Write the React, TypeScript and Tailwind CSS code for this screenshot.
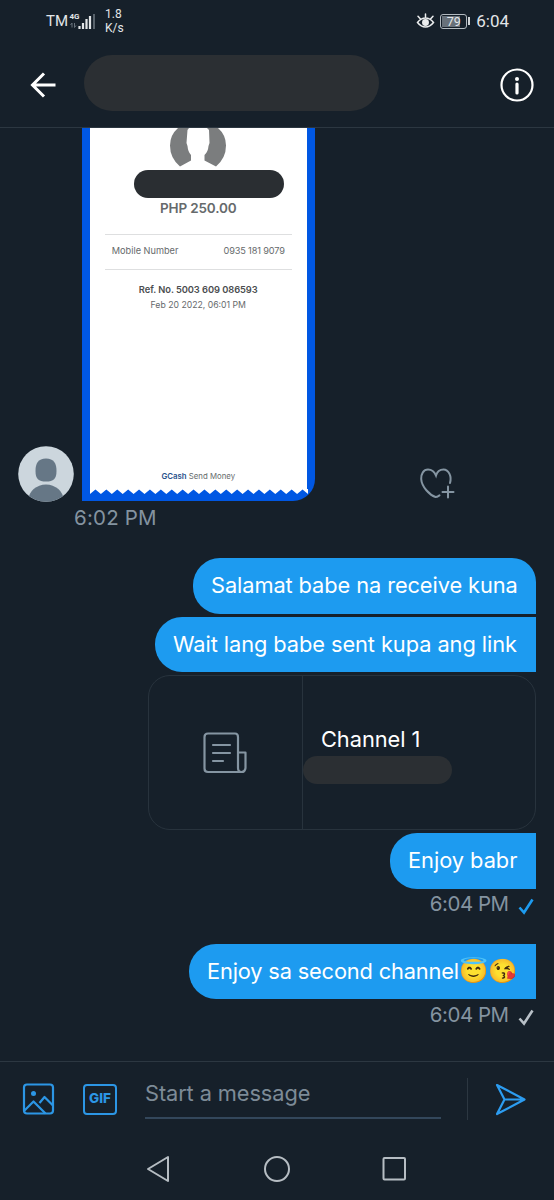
import React from 'react';

interface MessageBubbleProps {
  className: string;
  children: React.ReactNode;
}

export default function App() {
  return (
    <div className="w-[554px] h-[1200px] overflow-hidden flex flex-col bg-[#16202a] font-['Roboto','Noto_Color_Emoji',sans-serif] text-white">
      <StatusBar />
      <Header />
      <main className="h-[933px] shrink-0 overflow-hidden flex flex-col pr-[18.500px] font-['Inter','Noto_Color_Emoji',sans-serif]">
        <div className="flex items-end pl-[18px]">
          <Avatar />
          <Receipt />
          <HeartPlus />
        </div>
        <div className="h-[57px] pt-[3px] pl-[74px]">
          <Timestamp className="tracking-[0.2px]">6:02 PM</Timestamp>
        </div>

        <div className="flex flex-col items-end gap-[3px]">
          <MessageBubble className="w-[343px] rounded-tr-[24px] leading-[55px] tracking-[-0.09px]">Salamat babe na receive kuna</MessageBubble>
          <MessageBubble className="w-[381px] leading-[54px] tracking-[-0.07px]">Wait lang babe sent kupa ang link</MessageBubble>
          <LinkCard />
          <MessageBubble className="w-[146px] leading-[55px] tracking-[-0.03px]">Enjoy babr</MessageBubble>
        </div>
        <SentTime color="#1d9bf0" />
        <div className="mt-[24px] flex justify-end">
          <MessageBubble className="w-[347px] leading-[53px] tracking-[-0.16px]">
            Enjoy sa second channel<span className="text-[23.500px] tracking-normal">😇😘</span>
          </MessageBubble>
        </div>
        <SentTime color="#b8c0c7" />
      </main>
      <Composer />
      <NavBar />
    </div>
  );
}

const StatusBar = () => (
  <div className="h-[42px] shrink-0 flex items-center pl-[46px] pr-[45px] text-[#e3e6e8]">
    <span className="text-[15px] leading-none w-[23px]">TM</span>
    <svg width="27" height="20" viewBox="0 0 27 20" className="shrink-0">
      <text x="0.5" y="8" fontSize="8" fontWeight="700" fill="#e3e6e8">4G</text>
      <path d="M3 16.500V12l-1.500 2M5.500 12v4.500l1.500-2" stroke="#66707a" fill="none" />
      <path d="M10.500 18v-3M14 18v-6M17.500 18v-10M21 18v-13" stroke="#e3e6e8" strokeWidth="2.200" />
      <path d="M25 18V3" stroke="#59636c" strokeWidth="2" />
    </svg>
    <span className="ml-[9px] text-[12px] leading-[14px]">1.8<br />K/s</span>
    <svg className="ml-auto" width="19" height="17" viewBox="0 0 19 17" fill="none" stroke="#eceeef" strokeWidth="1.500" strokeLinecap="round">
      <path d="M1.500 9.500Q5 5 9.500 5T17.500 9.500Q14 14 9.500 14T1.500 9.500ZM9.500 4.500V1M4.500 6 2 3.300M14.500 6 17 3.300" />
      <circle cx="9.500" cy="9.500" r="2.700" fill="#eceeef" />
    </svg>
    <div className="ml-[5px] w-[27px] h-[15px] border border-[#b3bac0] rounded-[3px] p-px">
      <div className="w-full h-full flex items-center justify-center text-[12.500px] leading-[11px] bg-linear-to-r from-[#68717a] from-79% to-transparent to-79%">79</div>
    </div>
    <div className="ml-px w-[2px] h-[8px] bg-[#d0d4d7]" />
    <span className="ml-[6px] text-[17px] leading-none">6:04</span>
  </div>
);

const Header = () => (
  <header className="h-[86px] shrink-0 flex items-center border-b border-[#2c3741] pl-[30px] pr-[20px]">
    <svg width="26" height="26" viewBox="0 0 26 26" fill="none" stroke="white" strokeWidth="3">
      <path d="M25.500 13H3M14 1.500 2.500 13 14 24.500" />
    </svg>
    <div className="ml-[28px] -mt-[4px] w-[295px] h-[56px] rounded-full bg-[#2b2f33]" />
    <svg className="ml-auto" width="34" height="34" viewBox="0 0 34 34" fill="none" stroke="white">
      <circle cx="17" cy="17" r="15.500" strokeWidth="2.200" />
      <circle cx="17" cy="11" r="2" fill="white" stroke="none" />
      <path d="M17 16v9" strokeWidth="3.200" strokeLinecap="round" />
    </svg>
  </header>
);

const Avatar = () => (
  <svg width="56" height="56" viewBox="0 0 56 56" className="shrink-0 -mb-px">
    <clipPath id="avatar"><circle cx="28" cy="28" r="27.800" /></clipPath>
    <g clipPath="url(#avatar)">
      <rect width="56" height="56" fill="#ccd6dd" />
      <path d="M28 12.500c8 0 10.500 5 10.500 12.500 0 8-3 10.500-10.500 10.500S17.500 33 17.500 25c0-7.500 2.500-12.500 10.500-12.500Z" fill="#667786" />
      <ellipse cx="28" cy="54" rx="17.500" ry="15.500" fill="#667786" />
    </g>
  </svg>
);

const Receipt = () => (
  <div className="ml-[7.500px] w-[233.500px] h-[373px] shrink-0 rounded-br-[22px] overflow-hidden bg-[#0057e3] px-[8px] font-['Inter',sans-serif]">
    <div className="h-[361px] bg-white flex flex-col items-center text-[#666a6c]">
      <svg width="58" height="42" viewBox="0 0 58 42" className="shrink-0">
        <path d="M9 0Q1 7 1 17.500 1 30 11 38.500L22 32.500V27Q19 24 18.500 18L17.500 15 18.500 2 20 0ZM49 0Q57 7 57 17.500 57 30 47 38.500L35.500 32.500V27Q39 24 39.500 18L40.500 15 40 2 38 0Z" fill="#7b7d7e" />
      </svg>
      <div className="ml-[21px] w-[150px] h-[28px] shrink-0 rounded-full bg-[#2a2e32]" />
      <div className="mt-[1px] h-[18px] text-[13.500px] leading-[18px] tracking-[-0.15px] font-semibold">PHP 250.00</div>
      <div className="mt-[17px] h-[36px] w-[187px] shrink-0 border-y border-[#dedfe0] px-[7px] pb-[2px] flex items-center justify-between text-[9.200px]">
        <span>Mobile Number</span>
        <span className="tracking-[-0.15px]">0935 181 9079</span>
      </div>
      <div className="mt-[12px] text-[9.300px] leading-[16px] tracking-[-0.05px] font-semibold text-[#4a4d4f]">Ref. No. 5003 609 086593</div>
      <div className="text-[8.700px] leading-[14px]">Feb 20 2022, 06:01 PM</div>
      <div className="mt-auto mb-[6px] text-[7.800px] leading-[14px]"><span className="font-semibold text-[#28528c]">GCash</span> Send Money</div>
    </div>
    <Zigzag />
  </div>
);

const Zigzag = () => (
  <svg width="218" height="6" viewBox="0 0 220 6" preserveAspectRatio="none" className="block">
    <path
      d={`M0 0${Array.from({ length: 20 }, (_, i) => `L${i * 11} 5L${i * 11 + 5.5} 0.500`).join('')}L220 5V0Z`}
      fill="white"
    />
  </svg>
);

const HeartPlus = () => (
  <svg className="ml-[105px] -mb-px shrink-0" width="36" height="34" viewBox="0 0 36 34" fill="none" stroke="#8595a2" strokeWidth="2" strokeLinecap="round">
    <path d="M30 15C32 8 28.500 1.500 23.500 1.500c-4 0-6.500 2.500-7.500 6C14.500 4 12 1.500 8 1.500 3.500 1.500 1 6 1.200 11c.5 8 8.500 16 14.300 18 1.200 0 2.500-.7 4-1.700M28 18.500v11M22.500 24h11" />
  </svg>
);

const Timestamp: React.FC<MessageBubbleProps> = ({ className, children }) => (
  <div className={`text-[20.500px] leading-[28px] whitespace-nowrap text-[#8493a0] ${className}`}>{children}</div>
);

const MessageBubble: React.FC<MessageBubbleProps> = ({ className, children }) => (
  <div className={`h-[55.500px] pl-[18.500px] shrink-0 rounded-l-[27px] bg-[#1d9bf0] text-[21.800px] whitespace-nowrap ${className}`}>
    {children}
  </div>
);

const LinkCard = () => (
  <div className="w-[387.500px] h-[155px] border border-[#28333d] rounded-[22px] flex overflow-hidden">
    <div className="w-[153.500px] border-r border-[#28333d] flex items-center justify-center">
      <svg width="44" height="42" viewBox="0 0 44 42" fill="none" stroke="#8595a2" strokeWidth="2.200" strokeLinecap="round" strokeLinejoin="round">
        <path d="M38 40H5Q1.500 40 1.500 36.500V5Q1.500 1.500 5 1.500h27Q35 1.500 35 5v31q0 4 3.500 4T42.500 36V20.500H35M10 13h17M10 21h17M10 29h10" />
      </svg>
    </div>
    <div className="pt-[48px]">
      <div className="h-[32px] pl-[18.500px] text-[21.800px] leading-[30px] tracking-[-0.05px]">Channel 1</div>
      <div className="w-[149px] h-[28px] rounded-full bg-[#2b2f33]" />
    </div>
  </div>
);

const SentTime = ({ color }: { color: string }) => (
  <div className="h-[31px] flex items-center justify-end pr-[2px]">
    <Timestamp className="tracking-[-0.5px]">6:04 PM</Timestamp>
    <svg className="ml-[9px] mt-[5px]" width="16" height="17" viewBox="0 0 16 17" fill="none" stroke={color} strokeWidth="2.600">
      <path d="M1.500 9.500 6 14.500 14.500 1.500" />
    </svg>
  </div>
);

const Composer = () => (
  <div className="h-[78px] shrink-0 border-t border-[#2c3741] flex items-center pb-[3px] pl-[22px] pr-[28px]">
    <svg width="33" height="33" viewBox="0 0 33 33" fill="none" stroke="#2c96e5" strokeWidth="2.200" strokeLinejoin="round">
      <rect x="2" y="1.500" width="29" height="29" rx="3" />
      <path d="M2 28 11.500 18.500 23.500 30.500M17.500 20 22.500 14 31 22.500" />
      <circle cx="11.500" cy="10.500" r="2.500" fill="#2c96e5" stroke="none" />
    </svg>
    <div className="ml-[28px] w-[34px] h-[31px] border-2 border-[#2c96e5] rounded-[4px] flex items-center justify-center font-['Inter',sans-serif] text-[13.500px] leading-none font-extrabold text-[#2c96e5]">GIF</div>
    <div className="ml-[28px] w-[296px] h-[40px] border-b-2 border-[#33475b] font-['Inter',sans-serif] text-[21.800px] leading-[28px] tracking-[-0.1px] text-[#7d8b97]">Start a message</div>
    <div className="ml-[26px] w-px h-[42px] bg-[#2c3741]" />
    <svg className="ml-auto" width="31" height="33" viewBox="0 0 31 33" fill="none" stroke="#2c9cf0" strokeWidth="2.200" strokeLinejoin="round">
      <path d="M2 2 29.500 16.500 2 31 9.500 16.500ZM9.500 16.500h20" />
    </svg>
  </div>
);

const NavBar = () => (
  <nav className="h-[61px] shrink-0 flex items-center pb-[2px] pl-[146px]">
    <svg width="262" height="28" viewBox="0 0 262 28" fill="none" stroke="#b6bdc3" strokeWidth="2" strokeLinejoin="round">
      <path d="M22 2V26L2 14Z" />
      <circle cx="131" cy="14" r="12" />
      <rect x="237.500" y="3" width="21.500" height="21.500" rx="1" />
    </svg>
  </nav>
);
